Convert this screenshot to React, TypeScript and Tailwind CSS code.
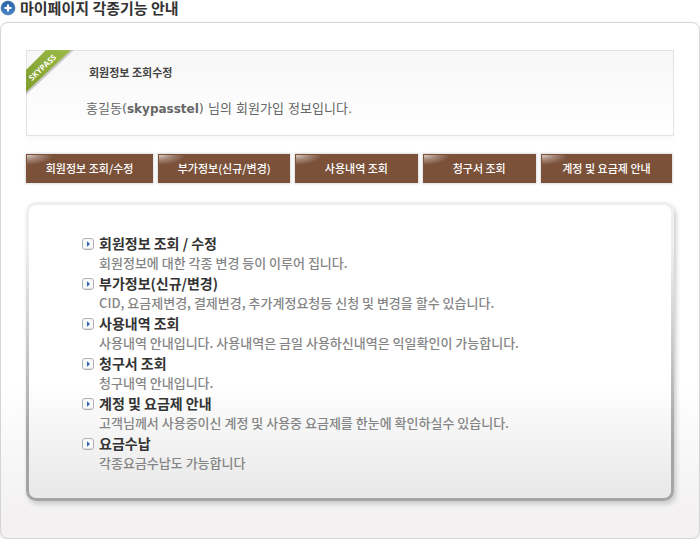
const menus = [
  { label: '회원정보 조회/수정', width: 'flex-[127]' },
  { label: '부가정보(신규/변경)', width: 'flex-[132]' },
  { label: '사용내역 조회', width: 'flex-[122]' },
  { label: '청구서 조회', width: 'flex-[113]' },
  { label: '계정 및 요금제 안내', width: 'flex-[131]' },
]

const features = [
  { title: '회원정보 조회 / 수정', text: '회원정보에 대한 각종 변경 등이 이루어 집니다.' },
  { title: '부가정보(신규/변경)', text: 'CID, 요금제변경, 결제변경, 추가계정요청등 신청 및 변경을 할수 있습니다.' },
  { title: '사용내역 조회', text: '사용내역 안내입니다. 사용내역은 금일 사용하신내역은 익일확인이 가능합니다.' },
  { title: '청구서 조회', text: '청구내역 안내입니다.' },
  { title: '계정 및 요금제 안내', text: '고객님께서 사용중이신 계정 및 사용중 요금제를 한눈에 확인하실수 있습니다.' },
  { title: '요금수납', text: '각종요금수납도 가능합니다' },
]

function PlusIcon() {
  return (
    <svg className="size-4 shrink-0" viewBox="0 0 16 16" aria-hidden="true">
      <defs>
        <linearGradient id="plus-fill" x1="0" y1="0" x2="0" y2="1">
          <stop offset="0" stopColor="#2560a8" />
          <stop offset="1" stopColor="#4b87cb" />
        </linearGradient>
      </defs>
      <circle cx="8" cy="8" r="7" fill="url(#plus-fill)" stroke="#3f6da8" strokeWidth="0.6" />
      <path d="M8 4.5v7M4.5 8h7" stroke="#fff" strokeWidth="2.2" />
    </svg>
  )
}

function ArrowIcon() {
  return (
    <svg className="size-3 shrink-0" viewBox="0 0 12 12" aria-hidden="true">
      <rect x="0.5" y="0.5" width="11" height="11" rx="2.5" fill="#f9f9f9" stroke="#b0b0b0" />
      <path d="M2.5 10.5h7" stroke="#e2e2e2" />
      <path d="M5 3.2L8 6L5 8.8z" fill="#2c64b4" />
    </svg>
  )
}

function Ribbon() {
  return (
    <svg className="absolute -top-px -left-px h-[46px] w-[50px]" viewBox="0 0 50 46" role="img" aria-label="SKYPASS">
      <defs>
        <linearGradient id="ribbon-fill" x1="0" y1="1" x2="1" y2="0">
          <stop offset="0" stopColor="#7f9d2c" />
          <stop offset="1" stopColor="#9cba48" />
        </linearGradient>
      </defs>
      <path d="M0 45L48 0H42L0 41z" fill="#bdbdbd" opacity="0.8" />
      <path d="M0 20L20 0H45L0 42z" fill="url(#ribbon-fill)" />
      <text
        x="16"
        y="17"
        transform="rotate(-43 16 17)"
        textAnchor="middle"
        dominantBaseline="central"
        className="fill-white font-['Open_Sans',sans-serif] text-[8px] font-bold"
      >
        SKYPASS
      </text>
    </svg>
  )
}

function MenuButton({ label, width }: { label: string; width: string }) {
  return (
    <button
      type="button"
      className={`${width} h-[29px] cursor-pointer border border-[#7b513a] bg-[#7b513a] bg-[radial-gradient(ellipse_26px_10px_at_0px_0px,#d9cbc3,#a78a7b_45%,transparent)] text-[11px] font-medium whitespace-nowrap text-white shadow-[0_0_2px_1px_#dedede]`}
    >
      {label}
    </button>
  )
}

export default function App() {
  return (
    <main className="font-['Noto_Sans_CJK_KR',sans-serif]">
      <header className="flex h-[22px] items-start gap-1">
        <PlusIcon />
        <h1 className="text-[15px] leading-4 font-bold text-[#333]">마이페이지 각종기능 안내</h1>
      </header>

      <div className="rounded-lg border border-[#d4d4d4] bg-[linear-gradient(#fff_70%,#f3f1f2_95%)] px-[25px] pt-[27px] pb-[37px] shadow-[0_1px_3px_#ddd]">
        <section className="relative h-[86px] border border-[#e3e3e3] bg-linear-to-b from-[#f7f7f7] to-white pt-[11px] shadow-[0_4px_4px_#fafafa]">
          <Ribbon />
          <h2 className="ml-[62px] text-[11px] leading-5 font-bold text-[#444]">회원정보 조회수정</h2>
          <p className="mt-[17px] ml-[59px] font-['DejaVu_Sans','Noto_Sans_CJK_KR',sans-serif] text-[13px] leading-5 font-normal text-[#666]">
            홍길동(<strong className="text-xs font-bold text-[#666]">skypasstel</strong>) 님의 회원가입 정보입니다.
          </p>
        </section>

        <nav className="mt-[18px] mr-0.5 flex gap-[5px]">
          {menus.map((menu) => (
            <MenuButton key={menu.label} {...menu} />
          ))}
        </nav>

        <section className="mt-[19px] rounded-[10px] bg-[linear-gradient(#efefef_15%,#a5a5a5_80%)] p-[3px] shadow-[2px_3px_5px_#c8c8c8]">
          <ul className="rounded-[7px] bg-[linear-gradient(#fff_60%,#e8e8e8)] pt-7 pr-4 pb-[25px] pl-[53px]">
            {features.map((feature) => (
              <li key={feature.title} className="flex gap-[5px]">
                <div className="flex h-[22px] items-center">
                  <ArrowIcon />
                </div>
                <div>
                  <h3 className="text-sm leading-5 font-bold text-[#333]">{feature.title}</h3>
                  <p className="text-[13px] leading-5 font-medium text-[#858585]">{feature.text}</p>
                </div>
              </li>
            ))}
          </ul>
        </section>
      </div>
    </main>
  )
}
